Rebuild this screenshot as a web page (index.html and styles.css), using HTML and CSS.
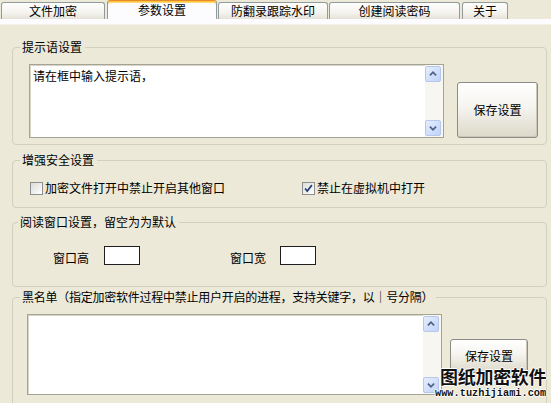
FILE: index.html
```html
<!DOCTYPE html>
<html lang="zh-CN">
<head>
  <meta charset="UTF-8">
  <title>参数设置</title>
  <link rel="stylesheet" href="styles.css">
</head>
<body>

  <div class="tabs">
    <div class="tab tab-file">文件加密</div>
    <div class="tab tab-params active">参数设置</div>
    <div class="tab tab-mark">防翻录跟踪水印</div>
    <div class="tab tab-pass">创建阅读密码</div>
    <div class="tab tab-about">关于</div>
  </div>

  <div class="page">
    <!-- 提示语 -->
    <fieldset class="group g-hint">
      <legend>提示语设置</legend>
      <div class="edit-row">
        <div class="memo">
          <div class="memo-text">请在框中输入提示语，</div>
          <div class="vscroll">
            <span class="sb-btn"><svg viewBox="0 0 16 16"><path d="M4.5 9.5 L8 6 L11.5 9.5" /></svg></span>
            <span class="sb-btn"><svg viewBox="0 0 16 16"><path d="M4.5 6.5 L8 10 L11.5 6.5" /></svg></span>
          </div>
        </div>
        <button class="btn">保存设置</button>
      </div>
    </fieldset>

    <!-- 安全选项 -->
    <fieldset class="group g-safe">
      <legend>增强安全设置</legend>
      <div class="check-row">
        <label class="check"><span class="box"></span>加密文件打开中禁止开启其他窗口</label>
        <label class="check"><span class="box checked"><svg viewBox="0 0 13 13"><path d="M2.5 6.5 L5 9.5 L10.5 2.5" /></svg></span>禁止在虚拟机中打开</label>
      </div>
    </fieldset>

    <!-- 窗口尺寸 -->
    <fieldset class="group g-size">
      <legend>阅读窗口设置，留空为为默认</legend>
      <div class="size-row">
        <span class="size-label">窗口高</span>
        <span class="field"></span>
        <span class="size-label gap-left">窗口宽</span>
        <span class="field"></span>
      </div>
    </fieldset>

    <!-- 黑名单 -->
    <fieldset class="group g-black">
      <legend>黑名单（指定加密软件过程中禁止用户开启的进程，支持关键字，以｜号分隔）</legend>
      <div class="edit-row">
        <div class="memo">
          <div class="memo-text"></div>
          <div class="vscroll">
            <span class="sb-btn"><svg viewBox="0 0 16 16"><path d="M4.5 9.5 L8 6 L11.5 9.5" /></svg></span>
            <span class="sb-btn"><svg viewBox="0 0 16 16"><path d="M4.5 6.5 L8 10 L11.5 6.5" /></svg></span>
          </div>
        </div>
        <button class="btn">保存设置</button>
      </div>
    </fieldset>
  </div>

  <div class="brand">
    <div class="brand-name">图纸加密软件</div>
    <div class="brand-url">www.tuzhijiami.com</div>
  </div>

</body>
</html>
```

FILE: styles.css
```css
body {
  margin: 0;
  width: 551px;
  height: 403px;
  overflow: hidden;
  position: relative;
  background: #ece9d8;
  font-family: "Noto Sans CJK SC", "Liberation Sans", sans-serif;
  font-size: 12px;
  color: #000;
}

/* tab strip */
.tabs {
  display: flex;
  align-items: flex-end;
  height: 19px;
  padding-left: 1px;
  background: #ece9d8;
}

.tab {
  height: 16px;
  line-height: 16px;
  text-align: center;
  border: 1px solid #919b9c;
  border-bottom: none;
  border-radius: 3px 3px 0 0;
  background: linear-gradient(to bottom, #fefefe, #f4f3ee 60%, #e4e2d8);
  box-sizing: content-box;
}

.tab-file   { width: 102px; }
.tab-params { width: 108px; margin-left: 2px; }
.tab-mark   { width: 108px; margin-left: 1px; }
.tab-pass   { width: 129px; margin-left: 1px; }
.tab-about  { width: 44px;  margin-left: 2px; }

.tab.active {
  height: 17px;
  padding-top: 1px;
  border-top: 1px solid #e68b2c;
  background: #fcfcfe;
  box-shadow: inset 0 1px 0 #ffc83c, inset 0 2px 0 #ffd777;
}

/* tab page */
.page {
  padding-top: 21px;
  background: linear-gradient(to bottom, #fcfcfe 0, #fcfcfe 5px, #ece9d8 6px);
}

.group {
  margin: 0 4px 0 12px;
  border: 1px solid #d0d0bf;
  border-radius: 4px;
  padding: 0;
  min-width: 0;
}

.group legend {
  line-height: 14px;
  padding: 0 3px 0 2px;
  margin-left: 7px;
}

.g-hint  { padding: 10px 0 6px; }
.g-safe  { margin-top: 8px; padding: 13px 0 11px; }
.g-size  { margin-top: 7px; padding: 17px 0 21px; }
.g-size legend { margin-left: 5px; }
.g-black { margin-top: 3px; padding: 10px 0 20px; }
.g-black legend { letter-spacing: -0.25px; }

.g-hint .edit-row  { margin-left: 16px; }
.g-black .edit-row { margin-left: 14px; align-items: flex-start; }

/* memo with scrollbar */
.edit-row {
  display: flex;
  align-items: flex-end;
}

.memo {
  display: flex;
  width: 415px;
  height: 74px;
  box-sizing: border-box;
  border: 1px solid #a5a394;
  box-shadow: inset 1px 1px 0 #d8d6c9;
  background: #fff;
}

.g-black .memo { height: 81px; }

.memo-text {
  flex: 1;
  padding: 3px 3px;
  line-height: 16px;
}

.vscroll {
  width: 17px;
  display: flex;
  flex-direction: column;
  justify-content: space-between;
  padding: 1px 1px 1px 0;
  background: #f7f6f1;
}

.sb-btn {
  display: block;
  width: 16px;
  height: 16px;
  box-sizing: border-box;
  border: 1px solid #b6c7ec;
  border-radius: 2px;
  background: linear-gradient(to bottom right, #e6eefc, #c1d3fb);
}

.sb-btn svg {
  display: block;
  width: 14px;
  height: 14px;
}

.sb-btn path {
  fill: none;
  stroke: #4d6185;
  stroke-width: 2;
}

/* push button */
.btn {
  width: 81px;
  height: 56px;
  margin-left: 13px;
  padding: 0;
  font: inherit;
  line-height: 14px;
  color: #000;
  border: 1px solid #8c8b85;
  border-radius: 3px;
  background: linear-gradient(to bottom, #ffffff, #f5f4ef 45%, #dcd8c9);
  box-shadow: inset -1px -1px 0 #cbc7b8;
}

.g-black .btn {
  width: 78px;
  height: 34px;
  margin: 25px 0 0 8px;
}

/* checkboxes */
.check-row {
  display: grid;
  grid-template-columns: 272px auto;
  height: 16px;
  margin-left: 17px;
  align-items: center;
}

.check {
  display: flex;
  align-items: center;
  gap: 2px;
  line-height: 16px;
}

.box {
  width: 13px;
  height: 13px;
  box-sizing: border-box;
  border: 1px solid #8e8f8f;
  background: linear-gradient(to bottom right, #dcdcd7, #fff);
}

.box svg {
  display: block;
  width: 11px;
  height: 11px;
}

.box path {
  fill: none;
  stroke: #21417a;
  stroke-width: 2;
}

/* window size fields */
.size-row {
  display: flex;
  align-items: center;
  height: 19px;
  margin-left: 40px;
}

.size-label {
  width: 36px;
  margin-top: 3px;
  margin-right: 15px;
}

.gap-left {
  margin-left: 90px;
  margin-right: 14px;
}

.field {
  width: 36px;
  height: 19px;
  box-sizing: border-box;
  border: 1px solid #1f1f1f;
  background: #fff;
}

/* corner logo */
.brand {
  position: absolute;
  left: 435px;
  top: 367px;
  text-align: right;
}

.brand-name {
  font-size: 18px;
  line-height: 19px;
  margin-bottom: 2px;
  font-weight: bold;
  letter-spacing: -0.3px;
  color: #111;
  text-shadow: 1px 0 0 #fff, -1px 0 0 #fff, 0 1px 0 #fff, 0 -1px 0 #fff;
}

.brand-url {
  font-family: "Liberation Mono", "DejaVu Sans Mono", monospace;
  font-size: 10.3px;
  line-height: 11px;
  font-weight: bold;
  color: #111;
  text-shadow: 1px 0 0 #fff, -1px 0 0 #fff, 0 1px 0 #fff, 0 -1px 0 #fff;
}
```
